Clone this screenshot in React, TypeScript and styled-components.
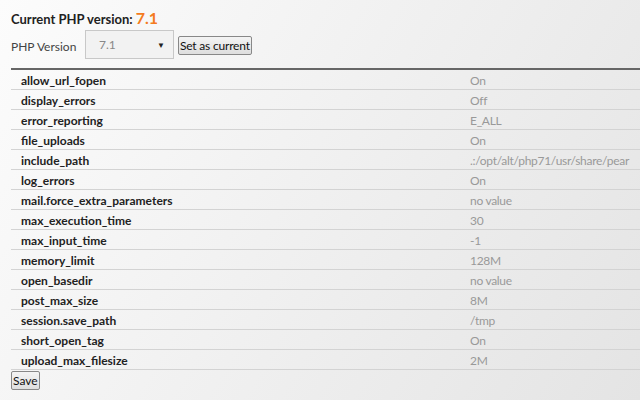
import React, { FC } from 'react';
import styled, { createGlobalStyle } from 'styled-components';

const GlobalStyle = createGlobalStyle`
  html, body {
    margin: 0;
    padding: 0;
    width: 640px;
    height: 400px;
    overflow: hidden;
  }
  body {
    background: linear-gradient(120deg, #fcfcfc 0%, #f0f0f0 50%, #e4e4e4 100%);
    font-family: Lato, "Open Sans", sans-serif;
    color: #333;
  }
`;

const Page = styled.div`
  padding: 8px 0 0 11px;
  width: 640px;
  box-sizing: border-box;
`;

const Title = styled.div`
  display: flex;
  align-items: baseline;
  gap: 3px;
  height: 20px;
  font-size: 13px;
  font-weight: 700;
  color: #222;
`;

const Version = styled.span`
  font-size: 16px;
  color: #f47b20;
`;

const SelectRow = styled.div`
  display: flex;
  align-items: center;
  height: 31px;
  margin-top: 1px;
  font-size: 12px;
  color: #444;
`;

const Label = styled.span`
  width: 74px;
  padding-top: 3px;
`;

const SelectBox = styled.div`
  display: flex;
  align-items: center;
  justify-content: space-between;
  width: 89px;
  height: 29px;
  box-sizing: border-box;
  border: 1px solid #c8c8c8;
  background: #f2f2f2;
  padding: 0 8px 0 13px;
  color: #888;
  font-size: 12px;
`;

const Arrow = styled.span`
  font-size: 8px;
  color: #222;
`;

const Button = styled.button`
  font-family: Lato, "Open Sans", sans-serif;
  font-size: 12px;
  color: #111;
  background: linear-gradient(#f4f4f4, #dedede);
  border: 1px solid #888;
  border-radius: 2px;
  padding: 0 1px;
  height: 19px;
  line-height: 16px;
  white-space: nowrap;
  cursor: pointer;
`;

const SetButton = styled(Button)`
  margin-left: 4px;
  margin-top: 2px;
  letter-spacing: -0.2px;
`;

const Table = styled.div`
  margin-top: 8px;
  border-top: 2px solid #666;
`;

const Row = styled.div`
  display: grid;
  grid-template-columns: 459px 1fr;
  height: 20px;
  box-sizing: border-box;
  border-bottom: 1px solid #d3d3d3;
  font-size: 12px;
  line-height: 21px;
`;

const Name = styled.span`
  padding-left: 10px;
  font-weight: 700;
  color: #222;
`;

const Value = styled.span`
  color: #999;
  letter-spacing: -0.3px;
  white-space: nowrap;
`;

const SaveButton = styled(Button)`
  display: block;
  margin-top: 1px;
`;

const settings: [string, string][] = [
  ['allow_url_fopen', 'On'],
  ['display_errors', 'Off'],
  ['error_reporting', 'E_ALL'],
  ['file_uploads', 'On'],
  ['include_path', '.:/opt/alt/php71/usr/share/pear'],
  ['log_errors', 'On'],
  ['mail.force_extra_parameters', 'no value'],
  ['max_execution_time', '30'],
  ['max_input_time', '-1'],
  ['memory_limit', '128M'],
  ['open_basedir', 'no value'],
  ['post_max_size', '8M'],
  ['session.save_path', '/tmp'],
  ['short_open_tag', 'On'],
  ['upload_max_filesize', '2M'],
];

const App: FC = () => {
  return (
    <>
      <GlobalStyle />
      <Page>
        <Title>
          Current PHP version: <Version>7.1</Version>
        </Title>
        <SelectRow>
          <Label>PHP Version</Label>
          <SelectBox>
            7.1
            <Arrow>▼</Arrow>
          </SelectBox>
          <SetButton>Set as current</SetButton>
        </SelectRow>
        <Table>
          {settings.map(([name, value]) => (
            <Row key={name}>
              <Name>{name}</Name>
              <Value>{value}</Value>
            </Row>
          ))}
        </Table>
        <SaveButton>Save</SaveButton>
      </Page>
    </>
  );
};

export default App;
